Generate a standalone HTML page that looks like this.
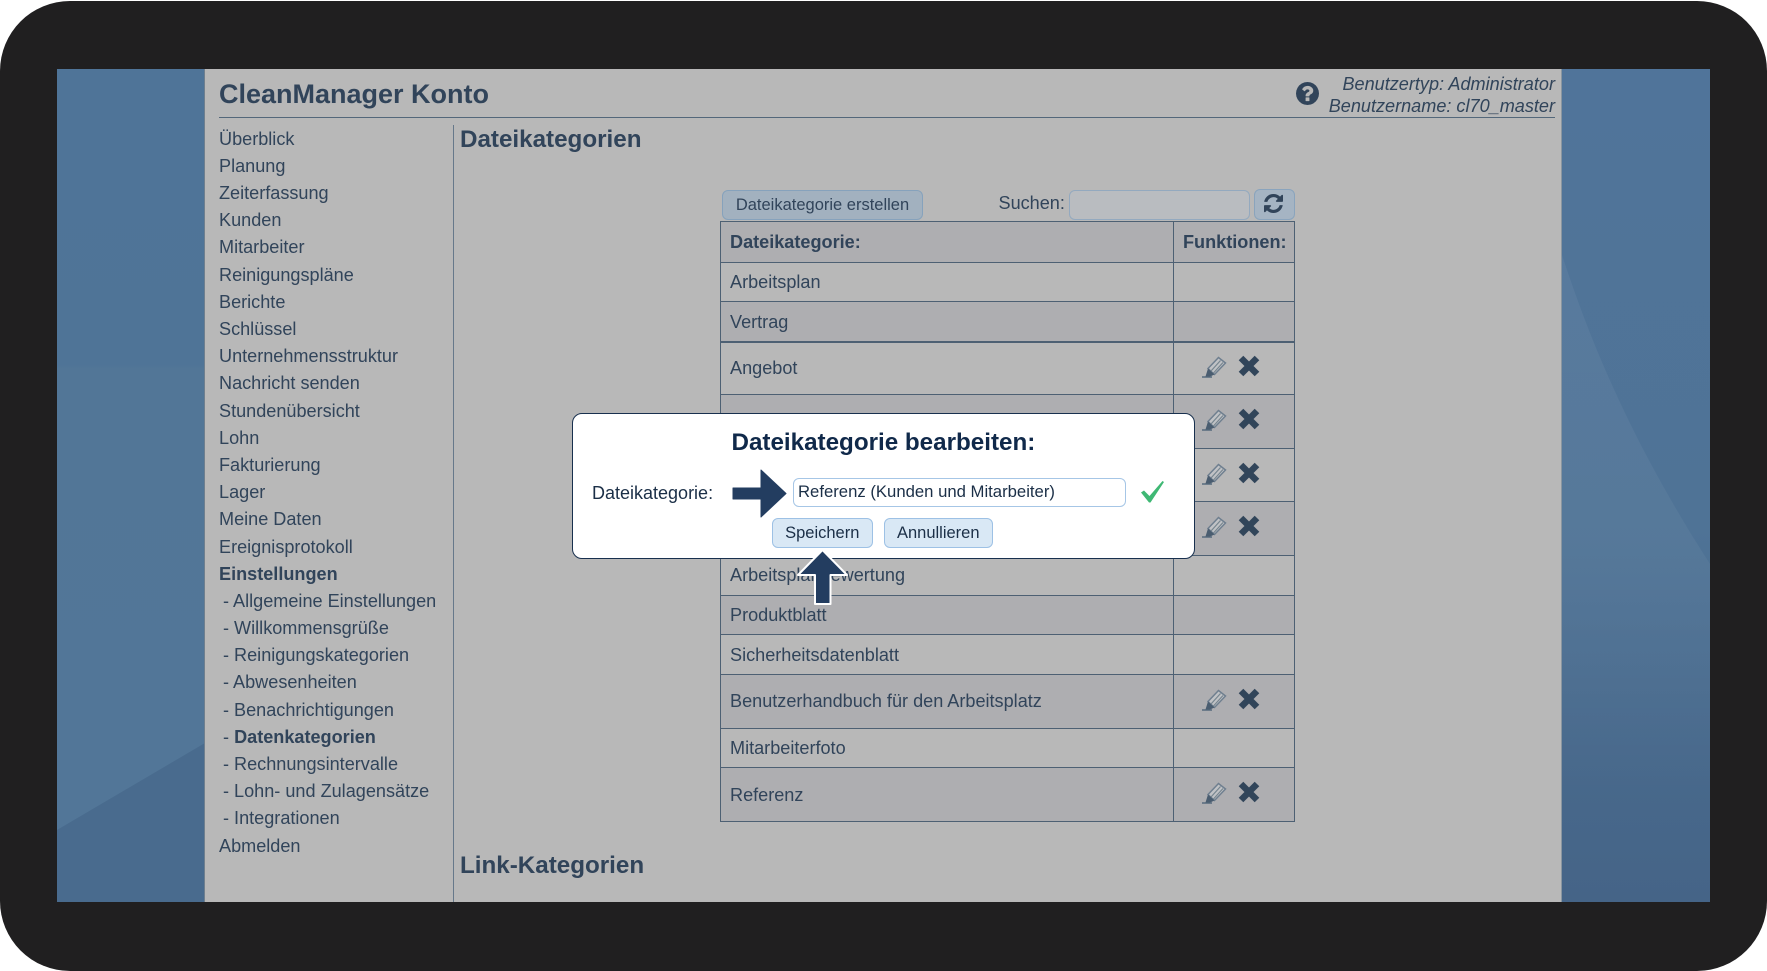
<!DOCTYPE html>
<html lang="de"><head><meta charset="utf-8"><title>CleanManager Konto</title>
<style>
html,body{margin:0;padding:0;width:1767px;height:971px;overflow:hidden;background:#fff;font-family:"Liberation Sans",sans-serif;color:#31445a}
.a{position:absolute}
.t{position:absolute;white-space:nowrap;line-height:0}
.nav{position:absolute;left:219px;top:125.7px;font-size:18.1px;line-height:27.18px;white-space:nowrap}
.nav div.s{padding-left:4px}
.r{position:absolute;left:721px;width:574px;border-top:1px solid #4d6073;box-sizing:border-box}
.d{background:#aeaeb1}
.b{font-size:18.1px}
.btn{position:absolute;box-sizing:border-box;border-radius:6px;white-space:nowrap;text-align:center}
svg{position:absolute;overflow:visible}
</style></head>
<body>
<div class="a" style="left:0;top:1px;width:1767px;height:970px;background:#201f20;border-radius:70px"></div>

<div class="a" style="left:57px;top:69px;width:148px;height:833px;background:linear-gradient(180deg,#4f7498 0,#4f7497 296px,#527697 300px,#527698 100%)"></div>
<div class="a" style="left:1562px;top:69px;width:148px;height:833px;background:linear-gradient(180deg,#50749a 0%,#4f7396 55%,#48698c 82%,#456487 100%)"></div>
<svg style="left:0;top:0" width="1767" height="971">
<defs><linearGradient id="w" x1="0" y1="255" x2="0" y2="800" gradientUnits="userSpaceOnUse"><stop offset="0" stop-color="#fff" stop-opacity=".05"/><stop offset=".6" stop-color="#fff" stop-opacity=".04"/><stop offset="1" stop-color="#fff" stop-opacity="0"/></linearGradient></defs>
<polygon points="57,830 205,743 205,902 57,902" fill="#496b8e"/>
<path d="M1562 255C1590 340 1630 440 1710 564V800H1562Z" fill="url(#w)"/>
</svg>

<div class="a" style="left:204px;top:69px;width:1358px;height:833px;background:#b8b8b8;border-left:1px solid #6f7f8e;border-right:1px solid #8a96a0;box-sizing:border-box"></div>

<div class="t" style="left:219px;top:93.6px;font-size:27px;font-weight:bold">CleanManager Konto</div>
<div class="a" style="left:219px;top:117px;width:1336px;height:1px;background:#53677a"></div>
<div class="t" style="right:212px;top:83.8px;font-size:18.1px;font-style:italic">Benutzertyp: Administrator</div>
<div class="t" style="right:212px;top:105.8px;font-size:18.1px;font-style:italic">Benutzername: cl70_master</div>
<svg style="left:1296px;top:82px" width="23" height="23" viewBox="128 128 1536 1536"><path fill="#31445a" d="M1024 1376v-192q0-14-9-23t-23-9h-192q-14 0-23 9t-9 23v192q0 14 9 23t23 9h192q14 0 23-9t9-23zm256-672q0-88-55.500-163t-138.500-116-170-41q-243 0-371 213-15 24 8 42l132 100q7 6 19 6 16 0 25-12 53-68 86-92 34-24 86-24 48 0 85.500 26t37.500 59q0 38-20 61t-68 45q-63 28-115.500 86.500t-52.500 125.500v36q0 14 9 23t23 9h192q14 0 23-9t9-23q0-19 21.500-49.500t54.500-49.500q32-18 49-28.500t46-35 44.500-48 28-60.500 12.500-81zm384 192q0 209-103 385.500t-279.500 279.500-385.500 103-385.500-103-279.500-279.500-103-385.500 103-385.500 279.500-279.500 385.500-103 385.500 103 279.500 279.500 103 385.500z"/></svg>

<div class="a" style="left:453px;top:125px;width:1px;height:777px;background:#66788a"></div>

<div class="nav">
<div>Überblick</div><div>Planung</div><div>Zeiterfassung</div><div>Kunden</div><div>Mitarbeiter</div><div>Reinigungspläne</div><div>Berichte</div><div>Schlüssel</div><div>Unternehmensstruktur</div><div>Nachricht senden</div><div>Stundenübersicht</div><div>Lohn</div><div>Fakturierung</div><div>Lager</div><div>Meine Daten</div><div>Ereignisprotokoll</div><div><b>Einstellungen</b></div>
<div class="s">- Allgemeine Einstellungen</div><div class="s">- Willkommensgrüße</div><div class="s">- Reinigungskategorien</div><div class="s">- Abwesenheiten</div><div class="s">- Benachrichtigungen</div><div class="s">- <b>Datenkategorien</b></div><div class="s">- Rechnungsintervalle</div><div class="s">- Lohn- und Zulagensätze</div><div class="s">- Integrationen</div><div>Abmelden</div>
</div>

<div class="t" style="left:460px;top:139.7px;font-size:24.2px;font-weight:bold">Dateikategorien</div>
<div class="t" style="left:460px;top:865.6px;font-size:24.2px;font-weight:bold">Link-Kategorien</div>

<div class="btn" style="left:722px;top:190px;width:201px;height:30px;background:#a2b1bf;border:1.5px solid #86a2bc;font-size:16.5px;line-height:29px">Dateikategorie erstellen</div>
<div class="t b" style="left:998.5px;top:203.3px">Suchen:</div>
<div class="btn" style="left:1069px;top:190px;width:181px;height:30px;background:#b9bcc0;border:1.5px solid #93a9bf"></div>
<div class="btn" style="left:1254px;top:189px;width:41px;height:31px;background:#a5b4c3;border:1.5px solid #8aa4bd"></div>
<svg style="left:1264px;top:194px" width="19" height="19" viewBox="128 128 1536 1536"><path fill="#31445a" d="M1639 1056q0 5-1 7-64 268-268 434.500t-478 166.500q-146 0-282.500-55t-243.500-157l-129 129q-19 19-45 19t-45-19-19-45v-448q0-26 19-45t45-19h448q26 0 45 19t19 45-19 45l-137 137q71 66 161 102t187 36q134 0 250-65t186-179q11-17 53-117 8-23 30-23h192q13 0 22.500 9.500t9.500 22.500zm25-800v448q0 26-19 45t-45 19h-448q-26 0-45-19t-19-45 19-45l138-138q-148-137-349-137-134 0-250 65t-186 179q-11 17-53 117-8 23-30 23h-199q-13 0-22.500-9.500t-9.500-22.500v-7q65-268 270-434.500t480-166.500q146 0 284 55.500t245 156.500l130-129q19-19 45-19t45 19 19 45z"/></svg>

<!-- table -->
<div class="r d" style="top:222px;height:40px;border-top:0"></div>
<div class="r" style="top:262px;height:39px"></div>
<div class="r d" style="top:301px;height:40px"></div>
<div class="r" style="top:341px;height:53px;border-top-width:2px"></div>
<div class="r d" style="top:394px;height:54px"></div>
<div class="r" style="top:448px;height:53px"></div>
<div class="r d" style="top:501px;height:54px"></div>
<div class="r" style="top:555px;height:40px"></div>
<div class="r d" style="top:595px;height:39px"></div>
<div class="r" style="top:634px;height:40px"></div>
<div class="r d" style="top:674px;height:54px"></div>
<div class="r" style="top:728px;height:39px"></div>
<div class="r d" style="top:767px;height:54px"></div>
<div class="a" style="left:720px;top:221px;width:575px;height:601px;box-sizing:border-box;border:1px solid #4d6073"></div>
<div class="a" style="left:1173px;top:222px;width:1px;height:599px;background:#4d6073"></div>

<div class="t b" style="left:730px;top:242px;font-weight:bold">Dateikategorie:</div>
<div class="t b" style="left:1183px;top:242px;font-weight:bold">Funktionen:</div>
<div class="t b" style="left:730px;top:281.5px">Arbeitsplan</div>
<div class="t b" style="left:730px;top:321.5px">Vertrag</div>
<div class="t b" style="left:730px;top:368px">Angebot</div>
<div class="t b" style="left:730px;top:575px">Arbeitsplanbewertung</div>
<div class="t b" style="left:730px;top:615px">Produktblatt</div>
<div class="t b" style="left:730px;top:654.5px">Sicherheitsdatenblatt</div>
<div class="t b" style="left:730px;top:701px">Benutzerhandbuch für den Arbeitsplatz</div>
<div class="t b" style="left:730px;top:748px">Mitarbeiterfoto</div>
<div class="t b" style="left:730px;top:794.5px">Referenz</div>

<!-- icons -->
<svg width="0" height="0" style="left:0;top:0"><defs>
<g id="p" fill="none"><path d="M6 12.500 16.500 1.500 23.500 7 12.500 18.500Z" fill="#c0c2c5" stroke="#6f7f8f" stroke-width="1.500"/><path d="M9 15 18.500 4.500M11.500 17 21 6.500" stroke="#76858f" stroke-width="1.200"/><path d="M0 21H10" stroke="#566a7d" stroke-width="1.500"/><path d="M3.500 20.500 6 12.500 12.500 18.500 8 20.500Z" fill="#4a5d70"/></g>
<g id="x"><path d="M3 3 19 19M19 3 3 19" stroke="#31455a" stroke-width="6.500" fill="none"/></g>
</defs></svg>
<svg style="left:1202px;top:356px" width="24" height="22"><use href="#p"/></svg><svg style="left:1238px;top:355px" width="22" height="22"><use href="#x"/></svg>
<svg style="left:1202px;top:409px" width="24" height="22"><use href="#p"/></svg><svg style="left:1238px;top:408px" width="22" height="22"><use href="#x"/></svg>
<svg style="left:1202px;top:463px" width="24" height="22"><use href="#p"/></svg><svg style="left:1238px;top:462px" width="22" height="22"><use href="#x"/></svg>
<svg style="left:1202px;top:516px" width="24" height="22"><use href="#p"/></svg><svg style="left:1238px;top:515px" width="22" height="22"><use href="#x"/></svg>
<svg style="left:1202px;top:689px" width="24" height="22"><use href="#p"/></svg><svg style="left:1238px;top:688px" width="22" height="22"><use href="#x"/></svg>
<svg style="left:1202px;top:782px" width="24" height="22"><use href="#p"/></svg><svg style="left:1238px;top:781px" width="22" height="22"><use href="#x"/></svg>

<!-- modal -->
<div class="a" style="left:572px;top:413px;width:623px;height:146px;box-sizing:border-box;background:#fff;border:1.5px solid #18304e;border-left-width:1px;border-right-width:1px;border-radius:10px"></div>
<div class="t" style="left:731.5px;top:443px;font-size:24.2px;font-weight:bold;color:#10294a">Dateikategorie bearbeiten:</div>
<div class="t" style="left:592px;top:492.8px;font-size:18px;color:#1b2f47">Dateikategorie:</div>
<div class="a" style="left:792.5px;top:478px;width:333px;height:29px;box-sizing:border-box;background:#fff;border:1.5px solid #a6c6e6;border-radius:6px"></div>
<div class="t" style="left:798px;top:492px;font-size:16.7px;color:#1b2f47">Referenz (Kunden und Mitarbeiter)</div>
<svg style="left:1141px;top:481px" width="23" height="22" viewBox="0 0 23 22"><path d="M0 11.500 3 9.500 8.500 15 21.500 0 23 1 9.500 21.500 8 21.500Z" fill="#3fb874"/></svg>
<div class="btn" style="left:772px;top:518px;width:100.500px;height:29.500px;background:#d9e8f5;border:1.5px solid #9dc1e5;font-size:16.5px;line-height:29px;color:#1b2f47">Speichern</div>
<div class="btn" style="left:884px;top:518px;width:108.500px;height:29.500px;background:#d9e8f5;border:1.5px solid #9dc1e5;font-size:16.5px;line-height:28.5px;color:#1b2f47">Annullieren</div>

<!-- arrows -->
<svg style="left:0;top:0" width="1767" height="971"><path d="M733 488H761V470L786 493.500 761 517V499H733Z" fill="#233d60" stroke="#233d60" stroke-width="1" stroke-linejoin="round"/>
<path d="M822.500 550 847 575H830.500V604H815V575H798Z" fill="#233d60" stroke="#fff" stroke-width="2" stroke-linejoin="round"/></svg>
</body></html>
